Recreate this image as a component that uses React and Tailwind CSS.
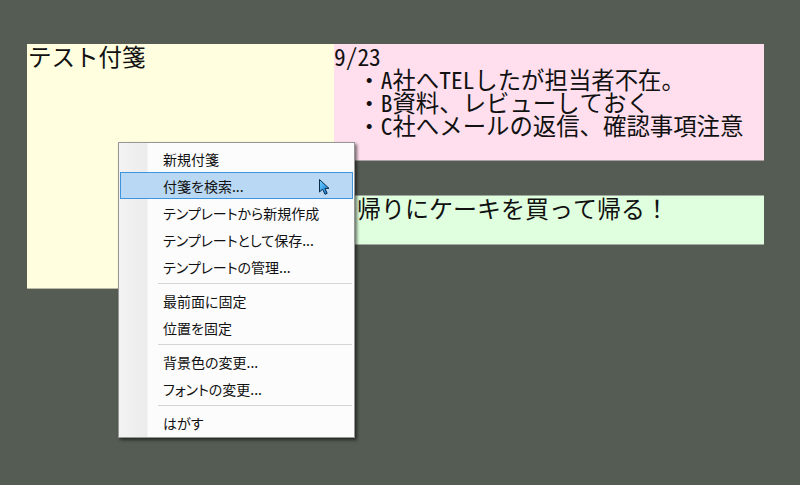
import React from "react";

function Sep() {
  return (
    <div className="h-[7px] flex items-center pl-[39px] pr-[2px]">
      <div className="h-[2px] w-full border-t border-[#d4d4d4] border-b-white" />
    </div>
  );
}

function Item({ children, active }) {
  return (
    <div
      className={
        "h-[27px] mx-[1px] flex items-center pl-[42px] border " +
        (active ? "bg-[#b9d8f3] border-[#3d95dd]" : "border-transparent")
      }
    >
      <span className="text-[14px] leading-none text-[#111] [font-feature-settings:'palt']">{children}</span>
    </div>
  );
}

export default function App() {
  return (
    <div className="relative w-[800px] h-[485px] overflow-hidden bg-[#545c53] font-['Noto_Sans_CJK_JP',sans-serif]">
      {/* yellow note */}
      <div className="absolute left-[27px] top-[44px] w-[307px] h-[245px] bg-[#ffffe0] border-b border-[#b9b9a6]">
        <div className="pl-[1px] text-[23.5px] leading-[24px] text-[#111] font-['Noto_Sans_Mono_CJK_JP','Noto_Sans_CJK_JP',monospace]">
          テスト付箋
        </div>
      </div>

      {/* pink note */}
      <div className="absolute left-[334px] top-[44px] w-[430px] h-[117px] bg-[#ffdfee] border-b border-[#a8a0a4]">
        <div className="pt-[1px] text-[23.4px] leading-[23px] text-[#111] whitespace-pre font-['Noto_Sans_Mono_CJK_JP','Noto_Sans_CJK_JP',monospace]">
          <div>9/23</div>
          <div>{"　・A社へTELしたが担当者不在。"}</div>
          <div>{"　・B資料、レビューしておく"}</div>
          <div>{"　・C社へメールの返信、確認事項注意"}</div>
        </div>
      </div>

      {/* green note */}
      <div className="absolute left-[334px] top-[195px] w-[430px] h-[50px] bg-[#dfffdf] border-t border-b border-[#9fa89f]">
        <div className="pl-[23px] text-[24px] leading-[24px] text-[#111] whitespace-pre font-['Noto_Sans_Mono_CJK_JP','Noto_Sans_CJK_JP',monospace]">
          帰りにケーキを買って帰る！
        </div>
      </div>

      {/* context menu */}
      <div className="absolute left-[118px] top-[142px] w-[237px] h-[296px] border border-[#979797] shadow-[2px_2px_3px_rgba(0,0,0,0.55)] bg-[linear-gradient(to_right,#f3f3f3_0px,#ececec_28px,#fcfcfc_29px,#fcfcfc_100%)] pt-[2px] flex flex-col">
        <Item>新規付箋</Item>
        <Item active>付箋を検索...</Item>
        <Item>テンプレートから新規作成</Item>
        <Item>テンプレートとして保存...</Item>
        <Item>テンプレートの管理...</Item>
        <Sep />
        <Item>最前面に固定</Item>
        <Item>位置を固定</Item>
        <Sep />
        <Item>背景色の変更...</Item>
        <Item>フォントの変更...</Item>
        <Sep />
        <Item>はがす</Item>
      </div>

      {/* mouse cursor */}
      <svg className="absolute left-[318px] top-[178px]" width="14" height="18" viewBox="0 0 14 18">
        <defs>
          <linearGradient id="cur" x1="0" y1="0" x2="1" y2="1">
            <stop offset="0" stopColor="#6fd0ff" />
            <stop offset="1" stopColor="#0a78d8" />
          </linearGradient>
        </defs>
        <path
          d="M1.5 1.5 L1.5 14 L4.6 11.2 L7 16.3 L9.2 15.3 L6.9 10.4 L11 10.4 Z"
          fill="url(#cur)"
          stroke="#0b2b4a"
          strokeWidth="1"
          strokeLinejoin="round"
        />
      </svg>
    </div>
  );
}
